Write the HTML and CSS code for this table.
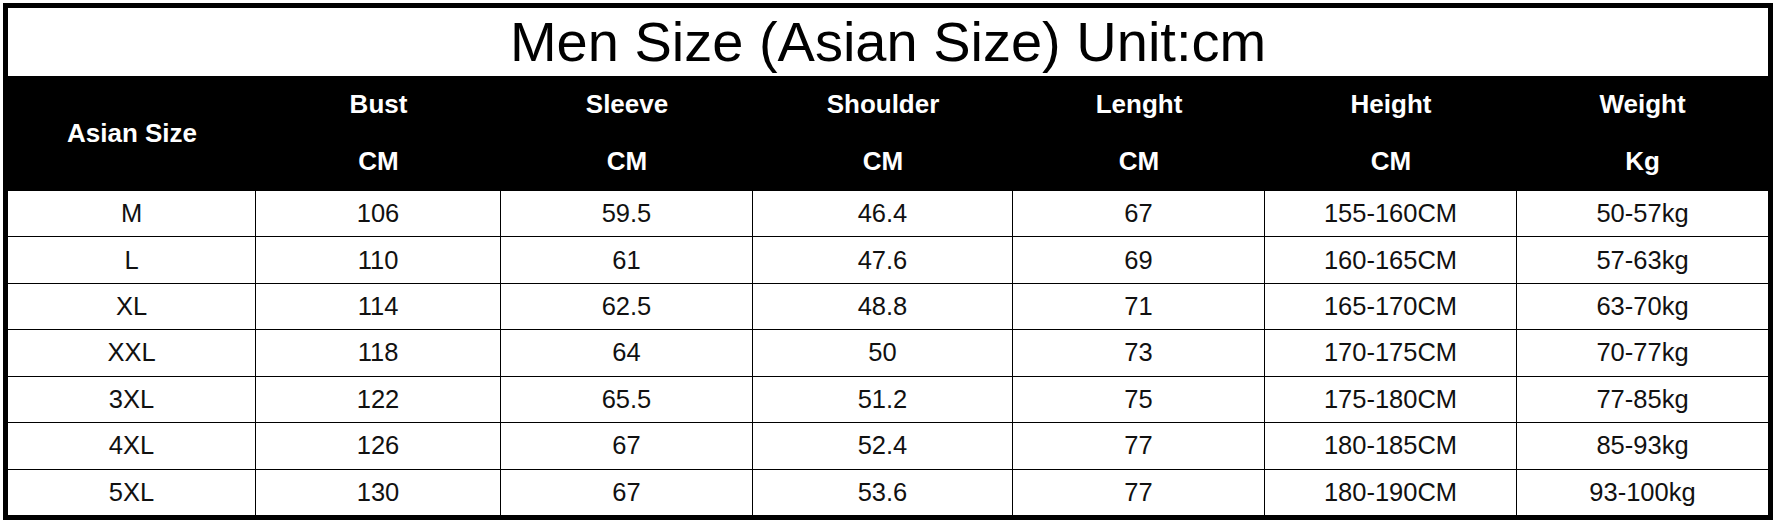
FILE: index.html
```html
<!DOCTYPE html>
<html>
<head>
<meta charset="utf-8">
<link rel="stylesheet" href="styles.css">
</head>
<body>
<div class="sheet">
  <div class="title">Men Size (Asian Size) Unit:cm</div>
  <div class="grid">
    <div class="hd hd-main">Asian Size</div>
    <div class="hd">Bust</div>
    <div class="hd">Sleeve</div>
    <div class="hd">Shoulder</div>
    <div class="hd">Lenght</div>
    <div class="hd">Height</div>
    <div class="hd">Weight</div>
    <div class="hd">CM</div>
    <div class="hd">CM</div>
    <div class="hd">CM</div>
    <div class="hd">CM</div>
    <div class="hd">CM</div>
    <div class="hd">Kg</div>

    <div class="c">M</div><div class="c">106</div><div class="c">59.5</div><div class="c">46.4</div><div class="c">67</div><div class="c">155-160CM</div><div class="c last">50-57kg</div>
    <div class="c">L</div><div class="c">110</div><div class="c">61</div><div class="c">47.6</div><div class="c">69</div><div class="c">160-165CM</div><div class="c last">57-63kg</div>
    <div class="c">XL</div><div class="c">114</div><div class="c">62.5</div><div class="c">48.8</div><div class="c">71</div><div class="c">165-170CM</div><div class="c last">63-70kg</div>
    <div class="c">XXL</div><div class="c">118</div><div class="c">64</div><div class="c">50</div><div class="c">73</div><div class="c">170-175CM</div><div class="c last">70-77kg</div>
    <div class="c">3XL</div><div class="c">122</div><div class="c">65.5</div><div class="c">51.2</div><div class="c">75</div><div class="c">175-180CM</div><div class="c last">77-85kg</div>
    <div class="c">4XL</div><div class="c">126</div><div class="c">67</div><div class="c">52.4</div><div class="c">77</div><div class="c">180-185CM</div><div class="c last">85-93kg</div>
    <div class="c">5XL</div><div class="c">130</div><div class="c">67</div><div class="c">53.6</div><div class="c">77</div><div class="c">180-190CM</div><div class="c last">93-100kg</div>
  </div>
</div>
</body>
</html>
```
FILE: styles.css
```css
html, body {
  margin: 0;
  padding: 0;
  background: #fff;
}

body {
  font-family: "Liberation Sans", Arial, sans-serif;
  color: #111;
}

.sheet {
  margin: 3px;
  width: 1760px;
  height: 507px;
  border: 5px solid #000;
  display: flex;
  flex-direction: column;
}

.title {
  height: 68px;
  line-height: 68px;
  font-size: 56px;
  text-align: center;
  color: #000;
}

.grid {
  flex: 1;
  display: grid;
  grid-template-columns: 248px 245px 252px 260px 252px 252px 251px;
  grid-template-rows: 57px 57px repeat(7, 1fr);
}

.hd {
  background: #000;
  color: #fff;
  font-weight: bold;
  font-size: 26px;
  display: flex;
  align-items: center;
  justify-content: center;
}

.hd-main {
  grid-row: span 2;
}

.c {
  display: flex;
  align-items: center;
  justify-content: center;
  font-size: 25.5px;
  border-top: 1px solid #000;
  border-right: 1px solid #000;
}

.c.last {
  border-right: none;
}
```
